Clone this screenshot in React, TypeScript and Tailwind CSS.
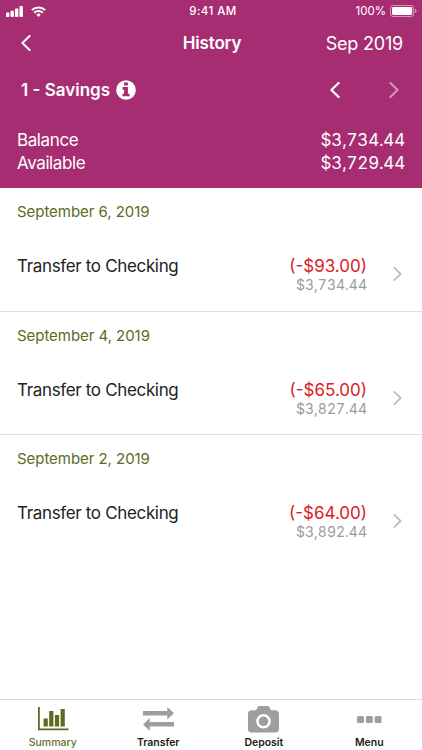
import React from 'react';

interface Transaction {
  id: number;
  date: string;
  title: string;
  amount: string;
  balance: string;
}

const transactions: Transaction[] = [
  { id: 1, date: 'September 6, 2019', title: 'Transfer to Checking', amount: '(-$93.00)', balance: '$3,734.44' },
  { id: 2, date: 'September 4, 2019', title: 'Transfer to Checking', amount: '(-$65.00)', balance: '$3,827.44' },
  { id: 3, date: 'September 2, 2019', title: 'Transfer to Checking', amount: '(-$64.00)', balance: '$3,892.44' },
];

const Chevron: React.FC<{ direction: 'left' | 'right'; className?: string; strokeWidth?: number }> = ({
  direction, className = '', strokeWidth = 2
}) => (
  <svg viewBox="0 0 10 16" fill="none" stroke="currentColor" strokeWidth={strokeWidth} strokeLinecap="round" strokeLinejoin="round" className={className}>
    <path d={direction === 'left' ? 'M8.6 1 1.4 8l7.2 7' : 'M1.4 1l7.2 7-7.2 7'} />
  </svg>
);

const StatusBar = () => (
  <div className="h-[22px] pl-[6px] pr-[5px] flex items-center">
    <div className="flex-1 flex items-center gap-[8px]">
      <svg viewBox="0 0 17 11" className="w-[17px] h-[11px]" fill="currentColor">
        <rect x="0" y="6.6" width="3.4" height="4.4" rx="0.8" />
        <rect x="4.5" y="4.8" width="3.4" height="6.2" rx="0.8" />
        <rect x="9" y="2.6" width="3.4" height="8.4" rx="0.8" />
        <rect x="13.5" y="0" width="3.4" height="11" rx="0.8" />
      </svg>
      <svg viewBox="0 0 15 11" className="w-[15px] h-[11px]" fill="none" stroke="currentColor" strokeWidth="2">
        <path d="M.8 4.1a9.6 9.6 0 0 1 13.4 0" />
        <path d="M3.2 6.8a6.1 6.1 0 0 1 8.6 0" />
        <path d="M7.5 11 5.3 8.7a3.1 3.1 0 0 1 4.4 0z" fill="currentColor" stroke="none" />
      </svg>
    </div>
    <span className="ml-[3px] pt-[1px] text-[11.5px] font-medium tracking-[0.45px]">9:41 AM</span>
    <div className="flex-1 flex items-center justify-end gap-[4px]">
      <span className="text-[11.5px] leading-[22px]">100%</span>
      <svg viewBox="0 0 27 12" className="w-[27px] h-[12px]">
        <rect x="0.5" y="0.5" width="23.2" height="11" rx="2.6" fill="none" stroke="currentColor" strokeOpacity="0.5" />
        <rect x="2" y="2" width="20.2" height="8" rx="1.4" fill="currentColor" />
        <path d="M25 4c1.1.4 1.5 1.1 1.5 2s-.4 1.6-1.5 2z" fill="currentColor" fillOpacity="0.5" />
      </svg>
    </div>
  </div>
);

const Header = () => (
  <header className="h-[188px] bg-[#a72d73] text-white">
    <StatusBar />
    <div className="h-[42px] pl-[21px] pr-[19px] flex items-center">
      <div className="flex-1">
        <Chevron direction="left" className="w-[10px] h-[16px]" />
      </div>
      <h1 className="pt-[2px] text-[17px] font-semibold tracking-[-0.15px]">History</h1>
      <div className="flex-1 text-right text-[18px] tracking-[-0.2px]">Sep 2019</div>
    </div>
    <div className="h-[52px] pl-[21px] pr-[23px] flex items-center">
      <span className="pt-[2px] text-[17px] font-semibold">1 - Savings</span>
      <svg viewBox="0 0 20 20" className="ml-[6px] w-[20px] h-[20px]">
        <circle cx="10" cy="10" r="9.8" fill="currentColor" />
        <path d="M8.1 2.4h3.8v3.2H8.1zM6.5 7.1h5.4v6.6h1.6v2.6h-7v-2.6h1.6v-4H6.500z" fill="#a72d73" />
      </svg>
      <Chevron direction="left" className="ml-auto w-[10px] h-[16px]" strokeWidth={2.2} />
      <Chevron direction="right" className="ml-[49px] w-[10px] h-[16px] opacity-50" />
    </div>
    <div className="pt-[13px] px-[17px] text-[17px] leading-[22.5px]">
      <div className="flex justify-between">
        <span className="tracking-[-0.4px]">Balance</span>
        <span className="tabular-nums tracking-[-0.2px]">$3,734.44</span>
      </div>
      <div className="flex justify-between">
        <span className="tracking-[-0.4px]">Available</span>
        <span className="tabular-nums tracking-[-0.2px]">$3,729.44</span>
      </div>
    </div>
  </header>
);

const TransactionRow: React.FC<{ transaction: Transaction; isLast: boolean }> = ({ transaction, isLast }) => (
  <li className={`h-[123.5px] pt-[14px] border-b ${isLast ? 'border-transparent' : 'border-[#dedede]'}`}>
    <div className="pl-[17px] text-[15px] leading-[20px] tracking-[-0.05px] text-[#5b6b22]">{transaction.date}</div>
    <div className="mt-[33px] pl-[17px] pr-[20px] flex">
      <span className="text-[17px] leading-[22px] tracking-[-0.34px] text-[#222]">{transaction.title}</span>
      <div className="ml-auto text-right">
        <div className="text-[17px] leading-[22px] text-[#d9201f]">{transaction.amount}</div>
        <div className="text-[14px] leading-[16px] tabular-nums text-[#9b9b9b]">{transaction.balance}</div>
      </div>
      <Chevron direction="right" className="mt-[12px] ml-[26px] w-[9px] h-[14px] text-[#bdbdbd]" />
    </div>
  </li>
);

const ChartIcon = () => (
  <svg viewBox="0 0 31 24" className="ml-[1px] w-[31px] h-[24px]" fill="currentColor">
    <path d="M0 0h1.800v21.500h28.700v1.700H0z" />
    <rect x="5.600" y="11.500" width="4.200" height="8" />
    <rect x="11.200" y="4" width="4.200" height="15.500" />
    <rect x="16.900" y="8" width="4.200" height="11.500" />
    <rect x="22.600" y="2" width="4.200" height="17.500" />
  </svg>
);

const TransferIcon = () => (
  <svg viewBox="0 0 31 24" className="w-[31px] h-[24px]" fill="currentColor">
    <path d="M0 4h24.300V0L31 6.300l-6.700 6.300V8.600H0z" />
    <path d="M31 19.600H6.700v4.100L0 17.400l6.700-6.300V15H31z" />
  </svg>
);

const CameraIcon = () => (
  <svg viewBox="0 0 31 27" className="w-[31px] h-[27px]" fill="currentColor">
    <path fillRule="evenodd" d="M3.800 4.300h4.400l1-2.600C9.600.6 10.500 0 11.600 0h7.800c1.100 0 2 .6 2.400 1.700l1 2.600h4.400A3.800 3.800 0 0 1 31 8.100v14.600a3.800 3.800 0 0 1-3.800 3.800H3.800A3.800 3.800 0 0 1 0 22.700V8.100a3.800 3.800 0 0 1 3.800-3.800zM15.500 8a7.300 7.300 0 1 0 0 14.600 7.300 7.300 0 0 0 0-14.600z" />
    <circle cx="15.500" cy="15.300" r="4.800" />
  </svg>
);

const MenuIcon = () => (
  <svg viewBox="0 0 25 7" className="w-[25px] h-[7px]" fill="currentColor">
    <rect x="0" y="0" width="7" height="7" rx="1.500" />
    <rect x="8.800" y="0" width="7" height="7" rx="1.500" />
    <rect x="17.600" y="0" width="7" height="7" rx="1.500" />
  </svg>
);

const tabs = [
  { label: 'Summary', Icon: ChartIcon, active: true },
  { label: 'Transfer', Icon: TransferIcon, active: false },
  { label: 'Deposit', Icon: CameraIcon, active: false },
  { label: 'Menu', Icon: MenuIcon, active: false },
];

const TabBar = () => (
  <nav className="h-[51px] border-t border-[#d8d8d8] grid grid-cols-4">
    {tabs.map(({ label, Icon, active }) => (
      <button key={label} className="flex flex-col items-center">
        <span className={`h-[36px] pt-[2px] flex items-center ${active ? 'text-[#5b6b22]' : 'text-[#9e9e9e]'}`}>
          <Icon />
        </span>
        <span className={`text-[10.5px] leading-[14px] ${active ? 'font-medium text-[#5f6e27]' : 'font-semibold tracking-[-0.05px] text-[#1c1c1c]'}`}>{label}</span>
      </button>
    ))}
  </nav>
);

const App = () => {
  return (
    <div className="w-full h-screen flex flex-col bg-white overflow-hidden font-['Inter',sans-serif]">
      <Header />
      <ul className="flex-1">
        {transactions.map((t, i) => (
          <TransactionRow key={t.id} transaction={t} isLast={i === transactions.length - 1} />
        ))}
      </ul>
      <TabBar />
    </div>
  );
};

export default App;
